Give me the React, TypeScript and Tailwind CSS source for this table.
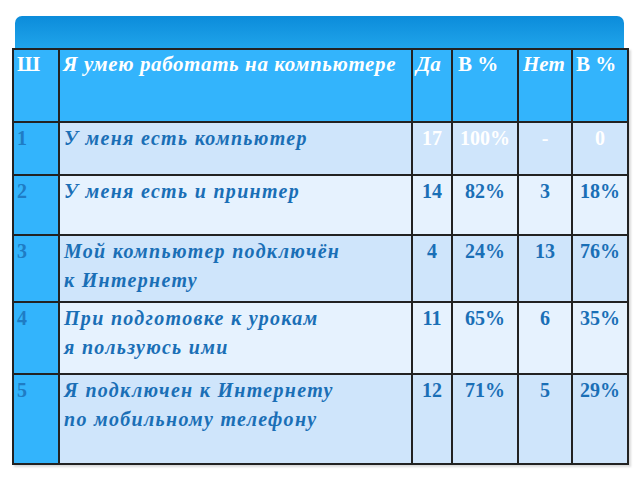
import React from "react"

const serif = { fontFamily: '"Liberation Serif", "Times New Roman", serif' }

type Row = {
  n: string
  text: string[]
  yes: string
  yesPct: string
  no: string
  noPct: string
  h: string
  bg: string
  light?: boolean
}

const rows: Row[] = [
  { n: "1", text: ["У меня есть компьютер"], yes: "17", yesPct: "100%", no: "-", noPct: "0", h: "h-[53px]", bg: "bg-[#cfe5fb]", light: true },
  { n: "2", text: ["У меня есть и принтер"], yes: "14", yesPct: "82%", no: "3", noPct: "18%", h: "h-[60px]", bg: "bg-[#e6f2fe]" },
  { n: "3", text: ["Мой компьютер подключён", "к Интернету"], yes: "4", yesPct: "24%", no: "13", noPct: "76%", h: "h-[67px]", bg: "bg-[#cfe5fb]" },
  { n: "4", text: ["При подготовке к урокам", "я пользуюсь ими"], yes: "11", yesPct: "65%", no: "6", noPct: "35%", h: "h-[72px]", bg: "bg-[#e6f2fe]" },
  { n: "5", text: ["Я подключен к Интернету", "по мобильному телефону"], yes: "12", yesPct: "71%", no: "5", noPct: "29%", h: "h-[90px]", bg: "bg-[#cfe5fb]" },
]

export default function App() {
  return (
    <div className="w-[640px] h-[480px] bg-white pt-[16px] pl-[12px]" style={serif}>
      <div className="ml-[3px] w-[609px] h-[32px] rounded-t-[7px] bg-gradient-to-b from-[#0b8cda] to-[#1fa4ea]" />
      <table className="table-fixed border-collapse w-[615px] border-2 border-[#222] shadow-[2px_2px_2px_rgba(0,0,0,0.15)]">
        <colgroup>
          <col className="w-[46px]" />
          <col className="w-[353px]" />
          <col className="w-[40px]" />
          <col className="w-[66px]" />
          <col className="w-[54px]" />
          <col className="w-[56px]" />
        </colgroup>
        <thead>
          <tr className="h-[73px] bg-[#33b4fc] text-white text-[21px] font-bold leading-[26px] align-top">
            <th className="border-2 border-[#222] text-left px-[3px] pt-[1px] font-bold">Ш</th>
            <th className="border-2 border-[#222] text-left px-[3px] pt-[1px] italic tracking-[0.6px] whitespace-nowrap">Я умею работать на компьютере</th>
            <th className="border-2 border-[#222] text-left px-[3px] pt-[1px] italic">Да</th>
            <th className="border-2 border-[#222] text-left px-[5px] pt-[1px]">В %</th>
            <th className="border-2 border-[#222] text-left px-[4px] pt-[1px] italic">Нет</th>
            <th className="border-2 border-[#222] text-left px-[3px] pt-[1px]">В %</th>
          </tr>
        </thead>
        <tbody>
          {rows.map((r) => (
            <tr key={r.n} className={`${r.h} ${r.bg} align-top text-[20px] font-bold leading-[29px]`}>
              <td className="border-2 border-[#222] bg-[#33b4fc] text-[#1f7cc4] px-[3px] pt-[1px]">{r.n}</td>
              <td className="border-2 border-[#222] text-[#1a6fb6] italic px-[4px] pt-[1px] tracking-[1.3px]">
                {r.text.map((t) => (
                  <div key={t}>{t}</div>
                ))}
              </td>
              <td className={`border-2 border-[#222] text-center pt-[1px] ${r.light ? "text-white" : "text-[#1a6fb6]"}`}>{r.yes}</td>
              <td className={`border-2 border-[#222] text-center pt-[1px] ${r.light ? "text-white" : "text-[#1a6fb6]"}`}>{r.yesPct}</td>
              <td className={`border-2 border-[#222] text-center pt-[1px] ${r.light ? "text-white" : "text-[#1a6fb6]"}`}>{r.no}</td>
              <td className={`border-2 border-[#222] text-center pt-[1px] ${r.light ? "text-white" : "text-[#1a6fb6]"}`}>{r.noPct}</td>
            </tr>
          ))}
        </tbody>
      </table>
    </div>
  )
}
